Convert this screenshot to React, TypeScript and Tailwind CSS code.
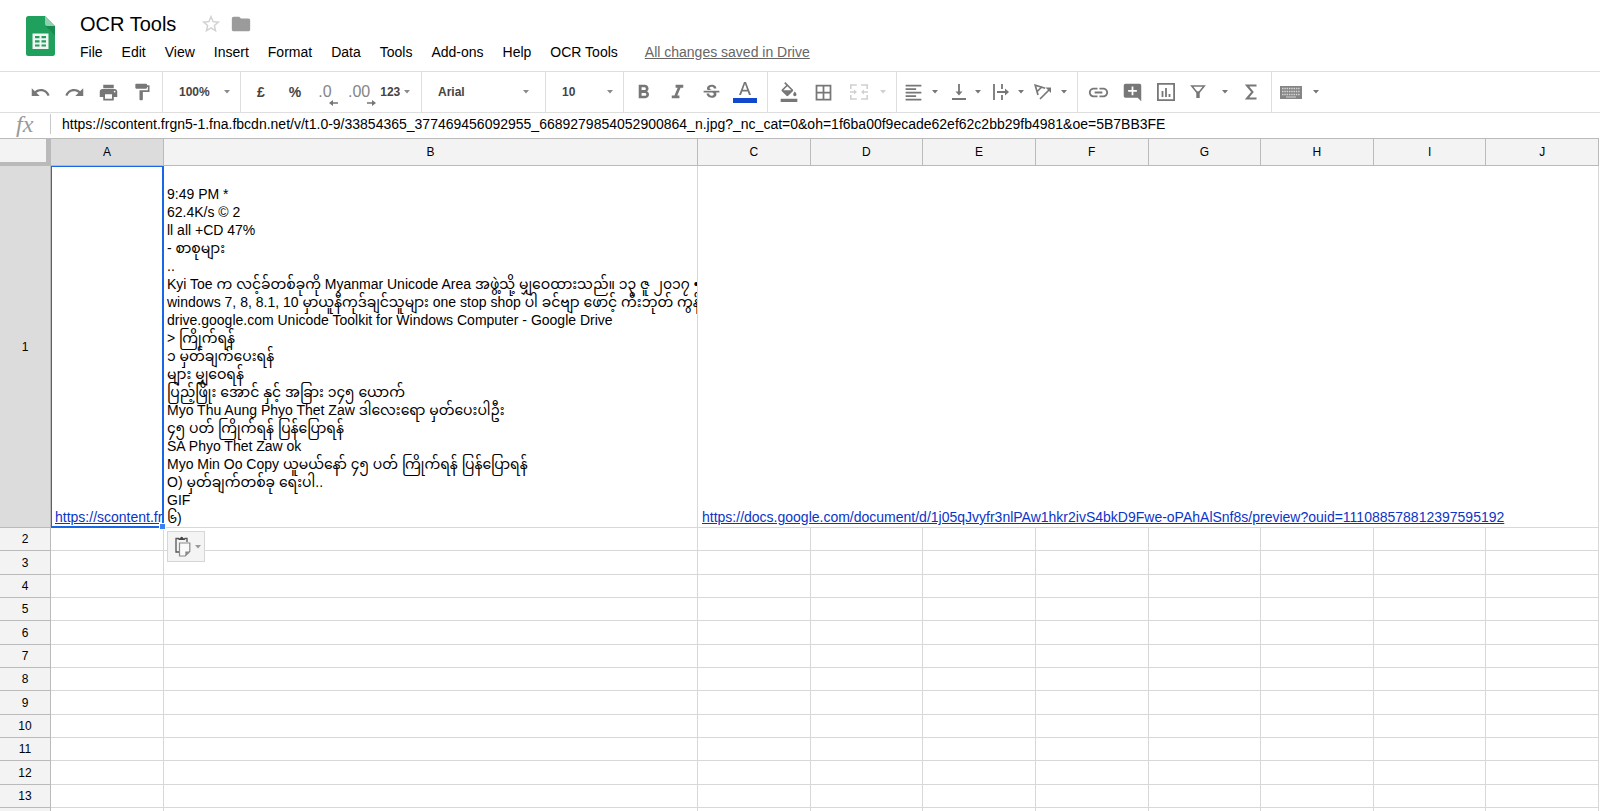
import type { ReactNode } from "react";
import {
  MdAddComment,
  MdBorderAll,
  MdFolder,
  MdFormatAlignLeft,
  MdFormatBold,
  MdFormatColorFill,
  MdFormatItalic,
  MdFormatPaint,
  MdLink,
  MdPrint,
  MdRedo,
  MdStarBorder,
  MdStrikethroughS,
  MdUndo,
} from "react-icons/md";

const IMAGE_URL =
  "https://scontent.frgn5-1.fna.fbcdn.net/v/t1.0-9/33854365_377469456092955_6689279854052900864_n.jpg?_nc_cat=0&oh=1f6ba00f9ecade62ef62c2bb29fb4981&oe=5B7BB3FE";
const DOC_URL =
  "https://docs.google.com/document/d/1j05qJvyfr3nlPAw1hkr2ivS4bkD9Fwe-oPAhAlSnf8s/preview?ouid=111088578812397595192";

const menus = ["File", "Edit", "View", "Insert", "Format", "Data", "Tools", "Add-ons", "Help", "OCR Tools"];
const columns = ["A", "B", "C", "D", "E", "F", "G", "H", "I", "J"];
const rows = [2, 3, 4, 5, 6, 7, 8, 9, 10, 11, 12, 13, 14];

const ocrLines = [
  "9:49 PM *",
  "62.4K/s © 2",
  "ll all +CD 47%",
  "- စာစုများ",
  "..",
  "Kyi Toe က လင့်ခ်တစ်ခုကို Myanmar Unicode Area အဖွဲ့သို့ မျှဝေထားသည်။ ၁၃ ဇူ ၂၀၁၇ •",
  "windows 7, 8, 8.1, 10 မှာယူနီကုဒ်ချင်သူများ one stop shop ပါ ခင်ဗျာ ဖောင့် ကီးဘုတ် ကွန်ပ",
  "drive.google.com Unicode Toolkit for Windows Computer - Google Drive",
  "> ကြိုက်ရန်",
  "၁ မှတ်ချက်ပေးရန်",
  "များ မျှဝေရန်",
  "ပြည့်ဖြိုး အောင် နှင့် အခြား ၁၄၅ ယောက်",
  "Myo Thu Aung Phyo Thet Zaw ဒါလေးရော မှတ်ပေးပါဦး",
  "၄၅ ပတ် ကြိုက်ရန် ပြန်ပြောရန်",
  "SA Phyo Thet Zaw ok",
  "Myo Min Oo Copy ယူမယ်နော် ၄၅ ပတ် ကြိုက်ရန် ပြန်ပြောရန်",
  "O) မှတ်ချက်တစ်ခု ရေးပါ..",
  "GIF",
  "၆)",
];

function Caret({ className = "" }: { className?: string }) {
  return (
    <svg viewBox="0 0 6 4" className={`h-1 w-1.5 shrink-0 ${className}`} fill="currentColor" aria-hidden>
      <path d="M0 0h6L3 3.6z" />
    </svg>
  );
}

function Group({ className = "", children }: { className?: string; children: ReactNode }) {
  return (
    <div className={`flex h-full shrink-0 items-center border-r border-[#dedede] ${className}`}>{children}</div>
  );
}

function Tool({ label, className = "w-[34px]", children }: { label: string; className?: string; children: ReactNode }) {
  return (
    <button
      type="button"
      aria-label={label}
      title={label}
      className={`flex h-8 shrink-0 items-center justify-center ${className}`}
    >
      {children}
    </button>
  );
}

function Picker({ label, value, className }: { label: string; value: string; className: string }) {
  return (
    <div className={`relative flex items-center ${className}`}>
      <select
        aria-label={label}
        defaultValue={value}
        className="w-full appearance-none bg-transparent text-xs font-bold text-[#444] outline-none"
      >
        <option>{value}</option>
      </select>
      <Caret className="pointer-events-none absolute right-0 text-[#8a8a8a]" />
    </div>
  );
}

function SheetsLogo() {
  return (
    <svg viewBox="0 0 29 40" className="h-10 w-[29px] shrink-0" aria-hidden>
      <path d="M2.5 0H19l10 10v27.5a2.5 2.5 0 0 1-2.5 2.5h-24A2.5 2.5 0 0 1 0 37.5v-35A2.5 2.5 0 0 1 2.5 0z" fill="#1fa15d" />
      <path d="M19.5 10H29v9.5z" fill="#178a4d" />
      <path d="M19 0l10 10h-7.5A2.5 2.5 0 0 1 19 7.5z" fill="#8ed1b1" />
      <path d="M6.5 17.500h16v15.500h-16z" fill="#f4f4f4" />
      <path d="M9 20h4.500v2.200H9zM15.500 20H20v2.200h-4.500zM9 24.200h4.500v2.200H9zM15.500 24.200H20v2.200h-4.500zM9 28.400h4.500v2.200H9zM15.500 28.400H20v2.200h-4.500z" fill="#1fa15d" />
    </svg>
  );
}

function DecimalIcon({ text, increase = false }: { text: string; increase?: boolean }) {
  return (
    <span className="relative pr-1.5 text-base text-[#858585]">
      {text}
      <svg viewBox="0 0 9 6" className="absolute right-0 -bottom-0.5 h-1.5 w-[9px]" fill="#757575" aria-hidden>
        {increase ? <path d="M0 2.300h5V0l4 3-4 3V3.700H0z" /> : <path d="M9 2.300H4V0L0 3l4 3V3.700h5z" />}
      </svg>
    </span>
  );
}

function MergeIcon() {
  return (
    <svg viewBox="0 0 18 16" className="h-4 w-[18px]" fill="none" stroke="currentColor" strokeWidth="1.600" aria-hidden>
      <path d="M.8 5V1h6M11 1h6.200v4M.8 11v4h6M11 15h6.200v-4M0 8h5M18 8h-5" />
      <path d="M4 5.500L7 8l-3 2.500zM14 5.500L11 8l3 2.500z" fill="currentColor" stroke="none" />
    </svg>
  );
}

function BottomAlignIcon() {
  return (
    <svg viewBox="0 0 14 16" className="h-4 w-3.5" fill="none" stroke="currentColor" strokeWidth="1.800" aria-hidden>
      <path d="M0 15h14M7 0v9" />
      <path d="M3.500 7.500h7L7 11.500z" fill="currentColor" stroke="none" />
    </svg>
  );
}

function OverflowIcon() {
  return (
    <svg viewBox="0 0 16 16" className="h-4 w-4" fill="none" stroke="currentColor" strokeWidth="1.800" aria-hidden>
      <path d="M1 0v16M9 0v5M9 11v5M4 8h9" />
      <path d="M12 4.500l4 3.500-4 3.500z" fill="currentColor" stroke="none" />
    </svg>
  );
}

function RotateIcon() {
  return (
    <svg viewBox="0 0 18 16" className="h-4 w-[18px]" fill="none" stroke="currentColor" strokeWidth="1.700" aria-hidden>
      <path d="M4 11L1.200 1.200l10 3M3.200 7.500l5-5M6 15L15.500 5.500" />
      <path d="M11.500 3.500H17V9z" fill="currentColor" stroke="none" />
    </svg>
  );
}

function ChartIcon() {
  return (
    <svg viewBox="0 0 18 18" className="h-[18px] w-[18px]" fill="none" stroke="currentColor" strokeWidth="1.800" aria-hidden>
      <path d="M.9.9h16.200v16.200H.9zM5.500 8v6M9 5v9M12.500 11v3" />
    </svg>
  );
}

function FilterIcon() {
  return (
    <svg viewBox="0 0 16 14" className="h-3.5 w-4" fill="none" stroke="currentColor" strokeWidth="1.600" aria-hidden>
      <path d="M1.800 1h12.400L9 7.500H7z" />
      <path d="M6.300 6.500h3.400V13H6.300z" fill="currentColor" stroke="none" />
    </svg>
  );
}

function SigmaIcon() {
  return (
    <svg viewBox="0 0 12 16" className="h-4 w-3" fill="none" stroke="currentColor" strokeWidth="2" aria-hidden>
      <path d="M11.500 1.500H2L7.500 8 2 14.500h9.500" />
    </svg>
  );
}

function KeyboardIcon() {
  return (
    <svg viewBox="0 0 22 13" className="h-[13px] w-[22px]" aria-hidden>
      <path d="M0 0h22v13H0z" fill="#858585" />
      <path
        d="M2 2.500h18M2 5.500h18M2 8.500h18"
        stroke="#d5d5d5"
        strokeWidth="1.600"
        strokeDasharray="1.500 .8"
        fill="none"
      />
      <path d="M6 11h10" stroke="#d5d5d5" />
    </svg>
  );
}

function ClipboardIcon() {
  return (
    <svg viewBox="0 0 16 21" className="h-[21px] w-4" fill="none" aria-hidden>
      <path d="M4 2.500H1V16h3M9.500 2.500H12V6" stroke="#555" strokeWidth="1.300" />
      <path d="M3.500 4V2.200h1.700a1.500 1.500 0 0 1 3 0h1.700V4z" fill="#444" />
      <path d="M4.500 7h10.300v8.500l-4.500 4.500H4.500z" fill="#fafafa" stroke="#8a8a8a" strokeWidth="1.200" />
      <path d="M10.300 20v-4.500h4.500z" fill="#8a8a8a" />
    </svg>
  );
}

function Header() {
  return (
    <header className="flex h-[71px] pt-4 pl-[26px]">
      <SheetsLogo />
      <div className="ml-[25px]">
        <div className="-mt-1 flex h-6 items-center">
          <input
            aria-label="Document name"
            defaultValue="OCR Tools"
            className="w-[120px] bg-transparent text-xl text-black outline-none"
          />
          <button type="button" aria-label="Star" className="text-[#d2d2d2]">
            <MdStarBorder size={22} />
          </button>
          <button type="button" aria-label="Move to folder" className="ml-2 text-[#9b9b9b]">
            <MdFolder size={22} />
          </button>
        </div>
        <nav className="mt-1.5 flex h-5 items-center gap-[19px] text-sm whitespace-nowrap text-black">
          {menus.map((menu) => (
            <button key={menu} type="button">
              {menu}
            </button>
          ))}
          <a href="#history" className="ml-2 text-[#666] underline">
            All changes saved in Drive
          </a>
        </nav>
      </div>
    </header>
  );
}

function Toolbar() {
  return (
    <div className="flex h-[41px] items-center overflow-hidden border-t border-[#dedede] text-[#777]">
      <Group className="w-[163px] pl-[23px]">
        <Tool label="Undo"><MdUndo size={21} /></Tool>
        <Tool label="Redo"><MdRedo size={21} /></Tool>
        <Tool label="Print"><MdPrint size={21} /></Tool>
        <Tool label="Paint format"><MdFormatPaint size={20} /></Tool>
      </Group>
      <Group className="w-[78px] pl-4">
        <Picker label="Zoom" value="100%" className="w-[51px]" />
      </Group>
      <Group className="w-[181px] pl-[3px]">
        <Tool label="Format as currency">
          <span className="text-sm font-bold text-[#444]">£</span>
        </Tool>
        <Tool label="Format as percent">
          <span className="text-sm font-bold text-[#444]">%</span>
        </Tool>
        <Tool label="Decrease decimal places" className="w-8"><DecimalIcon text=".0" /></Tool>
        <Tool label="Increase decimal places" className="pl-1"><DecimalIcon text=".00" increase /></Tool>
        <Tool label="More formats" className="gap-1 pl-1">
          <span className="text-xs font-bold text-[#444]">123</span>
          <Caret className="text-[#8a8a8a]" />
        </Tool>
      </Group>
      <Group className="w-[124px] pl-4">
        <Picker label="Font" value="Arial" className="w-[91px]" />
      </Group>
      <Group className="w-[78px] pl-4">
        <Picker label="Font size" value="10" className="w-[51px]" />
      </Group>
      <Group className="w-36 pl-0.5">
        <Tool label="Bold"><MdFormatBold size={23} /></Tool>
        <Tool label="Italic"><MdFormatItalic size={23} /></Tool>
        <Tool label="Strikethrough"><MdStrikethroughS size={21} /></Tool>
        <Tool label="Text color">
          <svg viewBox="0 0 24 22" className="h-[22px] w-6" aria-hidden>
            <path d="M6 14L11 1h2l5 13h-2l-1.300-3.500H9.300L8 14zM9.900 8.800h4.200L12 3z" fill="currentColor" />
            <path d="M0 17h24v5H0z" fill="#1148cc" />
          </svg>
        </Tool>
      </Group>
      <Group className="w-[129px] pl-1">
        <Tool label="Fill color"><MdFormatColorFill size={20} /></Tool>
        <Tool label="Borders"><MdBorderAll size={21} /></Tool>
        <Tool label="Merge cells" className="w-12 gap-3 pl-2 text-[#d0d0d0]">
          <MergeIcon />
          <Caret />
        </Tool>
      </Group>
      <Group className="w-[181px] gap-[9px] pl-1.5">
        <Tool label="Horizontal align" className="gap-2">
          <MdFormatAlignLeft size={21} />
          <Caret />
        </Tool>
        <Tool label="Vertical align" className="w-[34px] justify-end gap-[9px]">
          <BottomAlignIcon />
          <Caret />
        </Tool>
        <Tool label="Text wrapping" className="w-[34px] justify-end gap-[9px]">
          <OverflowIcon />
          <Caret />
        </Tool>
        <Tool label="Text rotation" className="w-[34px] justify-end gap-[9px]">
          <RotateIcon />
          <Caret />
        </Tool>
      </Group>
      <Group className="w-[194px] pl-[3px]">
        <Tool label="Insert link"><MdLink size={23} /></Tool>
        <Tool label="Insert comment"><MdAddComment size={21} /></Tool>
        <Tool label="Insert chart"><ChartIcon /></Tool>
        <Tool label="Filter" className="w-12 gap-4 pl-1">
          <FilterIcon />
          <Caret />
        </Tool>
        <Tool label="Functions" className="w-10"><SigmaIcon /></Tool>
      </Group>
      <Tool label="Input tools" className="gap-[11px] pl-2">
        <KeyboardIcon />
        <Caret />
      </Tool>
    </div>
  );
}

function FormulaBar() {
  return (
    <div className="flex h-[26px] items-center border-t border-[#dedede] pb-1">
      <label
        htmlFor="formula"
        className="w-[50px] pl-4 font-['Liberation_Serif',serif] text-2xl leading-5 text-[#999] italic"
      >
        fx
      </label>
      <input
        id="formula"
        defaultValue={IMAGE_URL}
        className="h-5 min-w-0 flex-1 border-l border-[#c8c8c8] pl-[11px] text-sm text-black outline-none"
      />
    </div>
  );
}

function Sheet() {
  return (
    <div className="pr-px">
      <table className="w-full table-fixed border-separate border-spacing-0">
        <colgroup>
          <col className="w-[51px]" />
          <col className="w-[113px]" />
          <col className="w-[534px]" />
          {columns.slice(2).map((name) => (
            <col key={name} />
          ))}
        </colgroup>
        <thead>
          <tr className="h-7">
            <td className="border-t border-r-[5px] border-b-4 border-[#bababa] bg-[#f3f3f3]" />
            {columns.map((name) => (
              <th
                key={name}
                scope="col"
                className={`border-y border-r border-[#bababa] p-0 text-xs font-normal text-black ${
                  name === "A" ? "bg-[#dcdcdc]" : "bg-[#f3f3f3]"
                }`}
              >
                {name}
              </th>
            ))}
          </tr>
        </thead>
        <tbody>
          <tr className="h-[362px] align-bottom text-sm leading-[18px]">
            <th
              scope="row"
              className="border-r border-b border-[#bababa] bg-[#dcdcdc] p-0 align-middle text-xs font-normal text-black"
            >
              1
            </th>
            <td className="relative p-0">
              <div className="overflow-hidden pb-0.5 pl-1">
                <a href={IMAGE_URL} className="whitespace-nowrap text-[#0b34c8] underline">
                  {IMAGE_URL}
                </a>
              </div>
              <div className="pointer-events-none absolute inset-0 border-t border-r-2 border-b-2 border-l border-[#1a66e8]" />
              <div className="absolute -right-0.5 -bottom-0.5 z-10 h-[7px] w-[7px] border border-white bg-[#3b82f0]" />
            </td>
            <td className="relative border-r border-b border-[#d8d8d8] p-0">
              <div className="overflow-hidden pl-[3px] whitespace-nowrap text-black">
                {ocrLines.map((line) => (
                  <p key={line} className="h-[18px]">
                    {line}
                  </p>
                ))}
              </div>
              <button
                type="button"
                aria-label="Paste options"
                className="absolute top-full left-[3px] mt-1 flex h-[31px] w-[38px] items-center justify-center gap-1 border border-[#d6d6d6] bg-[#f4f4f4] pl-1 text-[#999]"
              >
                <ClipboardIcon />
                <Caret />
              </button>
            </td>
            <td colSpan={8} className="border-r border-b border-[#d8d8d8] p-0 pb-px pl-1">
              <a href={DOC_URL} className="whitespace-nowrap text-[#0b34c8] underline">
                {DOC_URL}
              </a>
            </td>
          </tr>
          {rows.map((row) => (
            <tr key={row} className="h-[23px] [&:nth-child(3n)]:h-6">
              <th
                scope="row"
                className="border-r border-b border-[#bababa] bg-[#f3f3f3] p-0 text-xs leading-4 font-normal text-black"
              >
                {row}
              </th>
              {columns.map((name) => (
                <td key={name} className="border-r border-b border-[#d8d8d8] p-0" />
              ))}
            </tr>
          ))}
        </tbody>
      </table>
    </div>
  );
}

export default function App() {
  return (
    <div className="h-screen overflow-hidden bg-white font-['Liberation_Sans',Arial,'Noto_Sans_Myanmar',sans-serif]">
      <Header />
      <Toolbar />
      <FormulaBar />
      <Sheet />
    </div>
  );
}
